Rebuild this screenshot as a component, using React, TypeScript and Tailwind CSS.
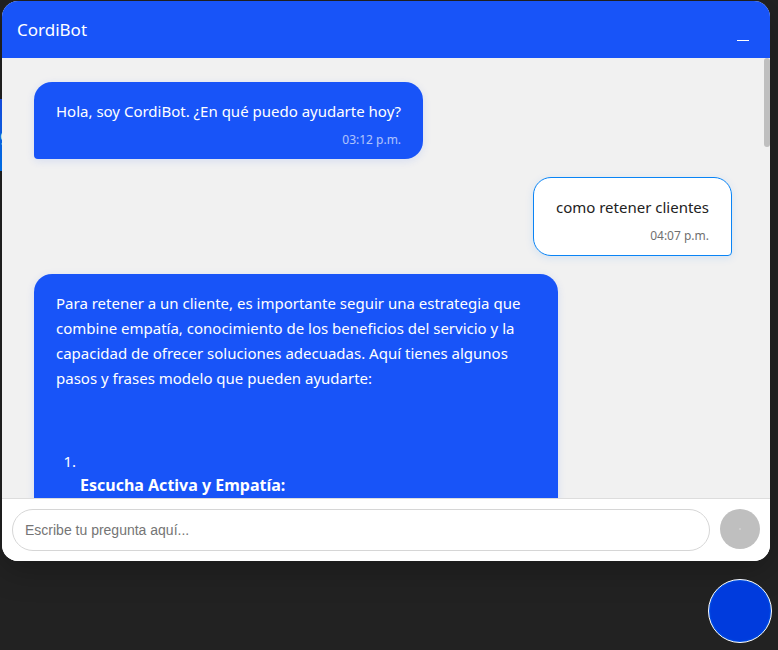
import type { ReactNode } from "react";

type BubbleProps = {
  from: "bot" | "user";
  time?: string;
  children: ReactNode;
};

function Bubble({ from, time, children }: BubbleProps) {
  const look =
    from === "bot"
      ? "self-start rounded-bl-[4px] bg-[#1854f8] text-white shadow-[0_2px_8px_rgba(24,84,248,0.12)]"
      : "self-end rounded-br-[4px] border border-[#0a84f5] bg-white text-[#222] shadow-[0_2px_8px_rgba(0,123,255,0.12)]";
  return (
    <article className={"max-w-[75%] shrink-0 rounded-[18px] px-[22px] pt-[17px] pb-[11px] " + look}>
      <div className="text-[15px] leading-[25px]">{children}</div>
      {time && (
        <time className="mt-2 block text-right text-xs leading-4 opacity-65">{time}</time>
      )}
    </article>
  );
}

export default function App() {
  return (
    <div className="relative isolate flex h-screen min-h-[400px] flex-col overflow-hidden bg-[#222] pt-px pr-2 pb-[7px] pl-0.5 font-['Noto_Sans','DejaVu_Sans_Condensed',sans-serif]">
      <div className="absolute top-[99px] left-0 -z-10 flex h-[72px] w-5 items-center bg-linear-to-b from-[#1854f8] to-[#007bff] text-base text-white">
        <span>g</span>
      </div>

      <section className="flex min-h-0 flex-1 flex-col overflow-hidden rounded-2xl bg-white shadow-[0_8px_32px_rgba(0,0,0,0.25)]">
        <header className="flex h-[57px] shrink-0 items-center justify-between bg-[#1854f8] pr-[21px] pl-[15px] text-white">
          <h1 className="text-[17px]">CordiBot</h1>
          <button type="button" aria-label="Minimizar" className="flex h-6 w-3 items-end pb-px">
            <span className="h-px w-full bg-white" />
          </button>
        </header>

        <div className="flex min-h-0 flex-1 bg-[#f1f1f1]">
          <main className="flex min-w-0 flex-1 flex-col gap-[18px] overflow-hidden px-8 pt-6">
            <Bubble from="bot" time="03:12 p.m.">
              Hola, soy CordiBot. ¿En qué puedo ayudarte hoy?
            </Bubble>
            <Bubble from="user" time="04:07 p.m.">
              como retener clientes
            </Bubble>
            <Bubble from="bot">
              <p>
                Para retener a un cliente, es importante seguir una estrategia que combine empatía,
                conocimiento de los beneficios del servicio y la capacidad de ofrecer soluciones
                adecuadas. Aquí tienes algunos pasos y frases modelo que pueden ayudarte:
              </p>
              <ol className="mt-[58px] list-decimal pb-10 pl-6 text-base leading-6 marker:text-[15px]">
                <li>
                  <br />
                  <strong>Escucha Activa y Empatía:</strong>
                </li>
              </ol>
            </Bubble>
          </main>
          <div className="w-1.5 shrink-0">
            <div className="h-[89px] rounded-[3px] bg-[#bfbfbf]" />
          </div>
        </div>

        <form
          className="flex shrink-0 items-start gap-2.5 border-t border-[#ddd] bg-white p-2.5"
          onSubmit={(e) => e.preventDefault()}
        >
          <input
            type="text"
            aria-label="Escribe tu pregunta"
            placeholder="Escribe tu pregunta aquí..."
            className="h-[42px] min-w-0 flex-1 rounded-full border border-[#d6d6d6] bg-white px-3 font-['Liberation_Sans',sans-serif] text-sm text-[#222] outline-none placeholder:text-[#757575]"
          />
          <button
            type="submit"
            aria-label="Enviar"
            className="flex size-10 shrink-0 items-center justify-center rounded-full bg-[#bfbfbf]"
          >
            <span className="size-0.5 rounded-full bg-[#d0d0d0]" />
          </button>
        </form>
      </section>

      <button
        type="button"
        aria-label="Abrir chat"
        className="mt-[18px] -mr-0.5 size-16 shrink-0 self-end rounded-full border border-white bg-[#003bdd] shadow-[inset_0_0_2px_#0a84f5]"
      />
    </div>
  );
}
